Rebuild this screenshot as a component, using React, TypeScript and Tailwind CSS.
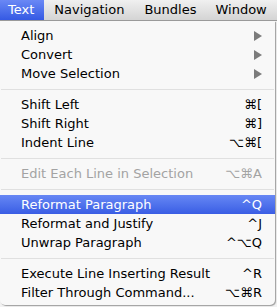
import React from 'react';

type Item =
  | { sep: true }
  | { label: string; key?: string; arrow?: boolean; disabled?: boolean; active?: boolean };

const items: Item[] = [
  { label: 'Align', arrow: true },
  { label: 'Convert', arrow: true },
  { label: 'Move Selection', arrow: true },
  { sep: true },
  { label: 'Shift Left', key: '⌘[' },
  { label: 'Shift Right', key: '⌘]' },
  { label: 'Indent Line', key: '⌥⌘[' },
  { sep: true },
  { label: 'Edit Each Line in Selection', key: '⌥⌘A', disabled: true },
  { sep: true },
  { label: 'Reformat Paragraph', key: '^Q', active: true },
  { label: 'Reformat and Justify', key: '^J' },
  { label: 'Unwrap Paragraph', key: '^⌥Q' },
  { sep: true },
  { label: 'Execute Line Inserting Result', key: '^R' },
  { label: 'Filter Through Command...', key: '⌥⌘R' },
];

function Arrow() {
  return (
    <svg width="8" height="10" viewBox="0 0 8 10" className="block">
      <path d="M0 0 L8 5 L0 10 Z" fill="#7c7c7c" />
    </svg>
  );
}

export default function App() {
  return (
    <div
      className="w-[277px] h-[307px] bg-[#f2f2f2] overflow-hidden text-[13px] text-black"
      style={{ fontFamily: '"DejaVu Sans", sans-serif' }}
    >
      {/* Menu bar */}
      <div className="h-[21px] flex bg-gradient-to-b from-[#f0f0f0] to-[#d4d4d4] border-b border-[#9a9a9a] leading-[20px]">
        <div className="pl-[8px] pr-[10px] bg-gradient-to-b from-[#6a88f5] to-[#3559e3] text-white">Text</div>
        <div className="px-[10px]">Navigation</div>
        <div className="px-[10px]">Bundles</div>
        <div className="px-[9px]">Window</div>
      </div>

      {/* Dropdown */}
      <div className="w-[275px] h-[284px] bg-[#f8f8f8] rounded-b-[5px] pt-[5px] shadow-[1px_1px_1px_rgba(0,0,0,0.35)]">
        {items.map((it, i) =>
          'sep' in it ? (
            <div key={i} className="h-[12px] flex items-center px-[1px]">
              <div className="h-px w-full bg-[#e0e0e0]" />
            </div>
          ) : (
            <div
              key={i}
              className={
                'h-[19px] flex items-center justify-between pl-[21px] pr-[13px] ' +
                (it.active
                  ? 'bg-gradient-to-b from-[#6787f4] to-[#3a5de4] text-white'
                  : it.disabled
                  ? 'text-[#a3a3a3]'
                  : '')
              }
            >
              <span>{it.label}</span>
              {it.arrow ? <Arrow /> : <span>{it.key}</span>}
            </div>
          )
        )}
      </div>
    </div>
  );
}
